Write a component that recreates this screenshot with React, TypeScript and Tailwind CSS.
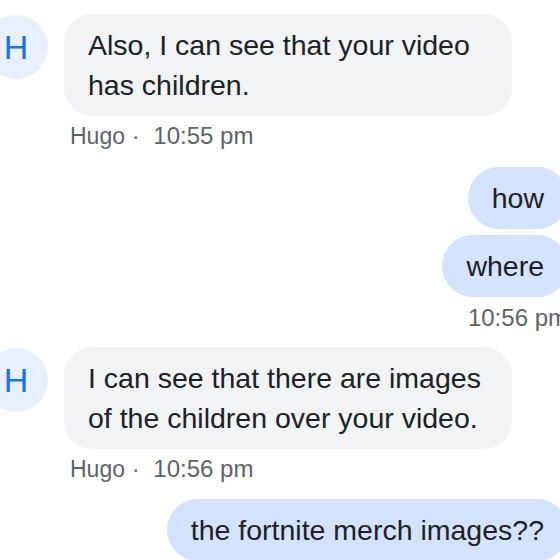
import React from "react";

function Avatar() {
  return (
    <div className="mt-[1px] flex h-[64px] w-[64px] shrink-0 items-center justify-center rounded-full bg-[#e8f0fe] text-[34px] leading-none text-[#1a73e8]">
      H
    </div>
  );
}

function TheirBubble({ text }: { text: string }) {
  return (
    <div className="max-w-[448px] rounded-[28px] bg-[#f1f3f4] px-[24px] py-[11px] text-[28.5px] leading-[40px] text-[#202124]">
      {text}
    </div>
  );
}

function MyBubble({ text }: { text: string }) {
  return (
    <div className="rounded-[31px] bg-[#d3e3fd] px-[24px] py-[11px] text-[28.5px] leading-[40px] text-[#202124]">
      {text}
    </div>
  );
}

function Meta({ name, time }: { name?: string; time: string }) {
  return (
    <div className="whitespace-nowrap text-[24px] leading-[28px] text-[#5f6368]">
      {name && (
        <>
          <span className="text-[23px]">{name}</span> <span>·</span>{" "}
          <span className="ml-[7px]">{time}</span>
        </>
      )}
      {!name && time}
    </div>
  );
}

function TheirGroup({ messages, time }: { messages: string[]; time: string }) {
  return (
    <div className="flex gap-[16px]">
      <Avatar />
      <div className="flex flex-col">
        <div className="flex flex-col items-start gap-[6px]">
          {messages.map((m, i) => (
            <TheirBubble key={i} text={m} />
          ))}
        </div>
        <div className="mt-[6px] pl-[6px]">
          <Meta name="Hugo" time={time} />
        </div>
      </div>
    </div>
  );
}

function MyGroup({ messages, time }: { messages: string[]; time?: string }) {
  return (
    <div className="flex flex-col items-end">
      <div className="flex flex-col items-end gap-[6px]">
        {messages.map((m, i) => (
          <MyBubble key={i} text={m} />
        ))}
      </div>
      {time && (
        <div className="mt-[7px]">
          <Meta time={time} />
        </div>
      )}
    </div>
  );
}

export default function App() {
  return (
    <div
      className="h-[560px] w-[560px] overflow-hidden bg-white"
      style={{ fontFamily: '"Liberation Sans", Arial, sans-serif' }}
    >
      <div className="ml-[-16px] flex w-[584px] flex-col pt-[14px]">
        <TheirGroup messages={["Also, I can see that your video has children."]} time="10:55 pm" />
        <div className="mt-[17px]">
          <MyGroup messages={["how", "where"]} time="10:56 pm" />
        </div>
        <div className="mt-[15px]">
          <TheirGroup
            messages={["I can see that there are images of the children over your video."]}
            time="10:56 pm"
          />
        </div>
        <div className="mt-[16px]">
          <MyGroup messages={["the fortnite merch images??"]} />
        </div>
      </div>
    </div>
  );
}
